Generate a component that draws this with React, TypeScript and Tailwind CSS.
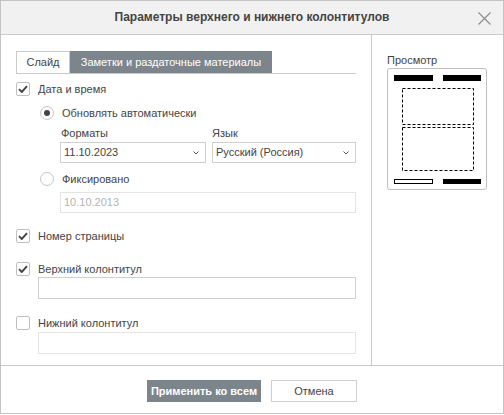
import type { ReactNode } from "react";

function CheckBox({ checked }: { checked?: boolean }) {
  return (
    <span className="flex h-[14px] w-[14px] shrink-0 items-center justify-center rounded-[2px] border border-[#c0c0c0] bg-white">
      {checked && (
        <svg width="10" height="8" viewBox="0 0 10 8">
          <path d="M1 4.2 L3.8 7 L9 1.2" fill="none" stroke="#444" strokeWidth="1.9" />
        </svg>
      )}
    </span>
  );
}

function Radio({ checked }: { checked?: boolean }) {
  return (
    <span className="flex h-[14px] w-[14px] shrink-0 items-center justify-center rounded-full border border-[#c6c6c6] bg-white">
      {checked && <span className="h-[6px] w-[6px] rounded-full bg-[#444]" />}
    </span>
  );
}

function Row({ className, children }: { className?: string; children: ReactNode }) {
  return <div className={`flex h-[14px] items-center ${className ?? ""}`}>{children}</div>;
}

function Select({ value, className }: { value: string; className?: string }) {
  return (
    <div
      className={`flex h-[21px] items-center justify-between border border-[#cfcfcf] bg-white pl-[3px] pr-[6px] ${className ?? ""}`}
    >
      <span>{value}</span>
      <svg width="6" height="4" viewBox="0 0 6 4">
        <path d="M0.5 0.5 L3 3 L5.5 0.5" fill="none" stroke="#555" strokeWidth="1" />
      </svg>
    </div>
  );
}

function Preview() {
  return (
    <div className="h-[122px] w-[100px] rounded-[3px] border border-[#c0c0c0] bg-white">
      <svg width="98" height="120" viewBox="0 0 98 120">
        <rect x="6" y="6" width="39" height="6" fill="#000" />
        <rect x="55" y="6" width="38" height="6" fill="#000" />
        <rect x="14.5" y="19.5" width="71" height="36" fill="none" stroke="#000" strokeDasharray="3 2" />
        <rect x="14.5" y="58.5" width="71" height="43" fill="none" stroke="#000" strokeDasharray="3 2" />
        <rect x="6.5" y="110.5" width="38" height="4" fill="none" stroke="#000" />
        <rect x="55" y="110" width="38" height="5" fill="#000" />
      </svg>
    </div>
  );
}

export default function App() {
  return (
    <div className="h-[415px] w-[504px] bg-white font-['Liberation_Sans',Arial,sans-serif] text-[11px] leading-[13px] text-[#444]">
      <div className="flex h-[414px] flex-col border border-[#c4c4c4]">
        <div className="relative flex h-[34px] shrink-0 items-center justify-center border-b border-[#cbcbcb] bg-[#f1f1f1]">
          <span className="text-[12px] font-bold text-[#444]">Параметры верхнего и нижнего колонтитулов</span>
          <svg className="absolute right-[12px] top-[11px]" width="13" height="13" viewBox="0 0 13 13">
            <path d="M0.5 0.5 L12.5 12.5 M12.5 0.5 L0.5 12.5" stroke="#8a8a8a" strokeWidth="1.1" />
          </svg>
        </div>

        <div className="flex h-[330px] shrink-0">
          <div className="w-[371px] shrink-0 border-r border-[#cbcbcb] pl-[15px] pt-[16px]">
            <div className="w-[340px]">
              <div className="flex border-b border-[#cbcbcb]">
                <div className="flex h-[22px] w-[54px] items-center justify-center border-l border-r border-t border-[#cbcbcb]">
                  Слайд
                </div>
                <div className="flex h-[22px] w-[202px] items-center justify-center bg-[#7d858c] text-white">
                  Заметки и раздаточные материалы
                </div>
              </div>

              <Row className="mt-[8px] gap-[8px]">
                <CheckBox checked />
                <span>Дата и время</span>
              </Row>

              <Row className="ml-[24px] mt-[10px] gap-[8px]">
                <Radio checked />
                <span>Обновлять автоматически</span>
              </Row>

              <div className="ml-[44px] mt-[7px] flex w-[296px] gap-[6px]">
                <div className="w-[146px]">
                  <div className="pl-[1px]">Форматы</div>
                  <Select className="mt-[2px]" value="11.10.2023" />
                </div>
                <div className="w-[144px]">
                  <div>Язык</div>
                  <Select className="mt-[2px]" value="Русский (Россия)" />
                </div>
              </div>

              <Row className="ml-[24px] mt-[9px] gap-[8px]">
                <Radio />
                <span>Фиксировано</span>
              </Row>

              <div className="ml-[44px] mt-[6px] flex h-[21px] w-[296px] items-center border border-[#e4e4e4] pl-[3px] text-[#b4b4b4]">
                10.10.2013
              </div>

              <Row className="mt-[16px] gap-[8px]">
                <CheckBox checked />
                <span>Номер страницы</span>
              </Row>

              <Row className="mt-[19px] gap-[8px]">
                <CheckBox checked />
                <span>Верхний колонтитул</span>
              </Row>
              <div className="ml-[22px] mt-[1px] h-[22px] w-[318px] border border-[#cfcfcf] bg-white" />

              <Row className="mt-[17px] gap-[8px]">
                <CheckBox />
                <span>Нижний колонтитул</span>
              </Row>
              <div className="ml-[22px] mt-[2px] h-[22px] w-[318px] border border-[#e4e4e4] bg-white" />
            </div>
          </div>

          <div className="flex-1 pl-[15px] pt-[19px]">
            <div>Просмотр</div>
            <div className="mt-[1px]">
              <Preview />
            </div>
          </div>
        </div>

        <div className="flex flex-1 justify-center gap-[10px] border-t border-[#cbcbcb] pt-[14px]">
          <button className="h-[22px] w-[114px] bg-[#7d858c] font-bold text-white">Применить ко всем</button>
          <button className="h-[22px] w-[86px] border border-[#cfcfcf] bg-white text-[#444]">Отмена</button>
        </div>
      </div>
    </div>
  );
}
